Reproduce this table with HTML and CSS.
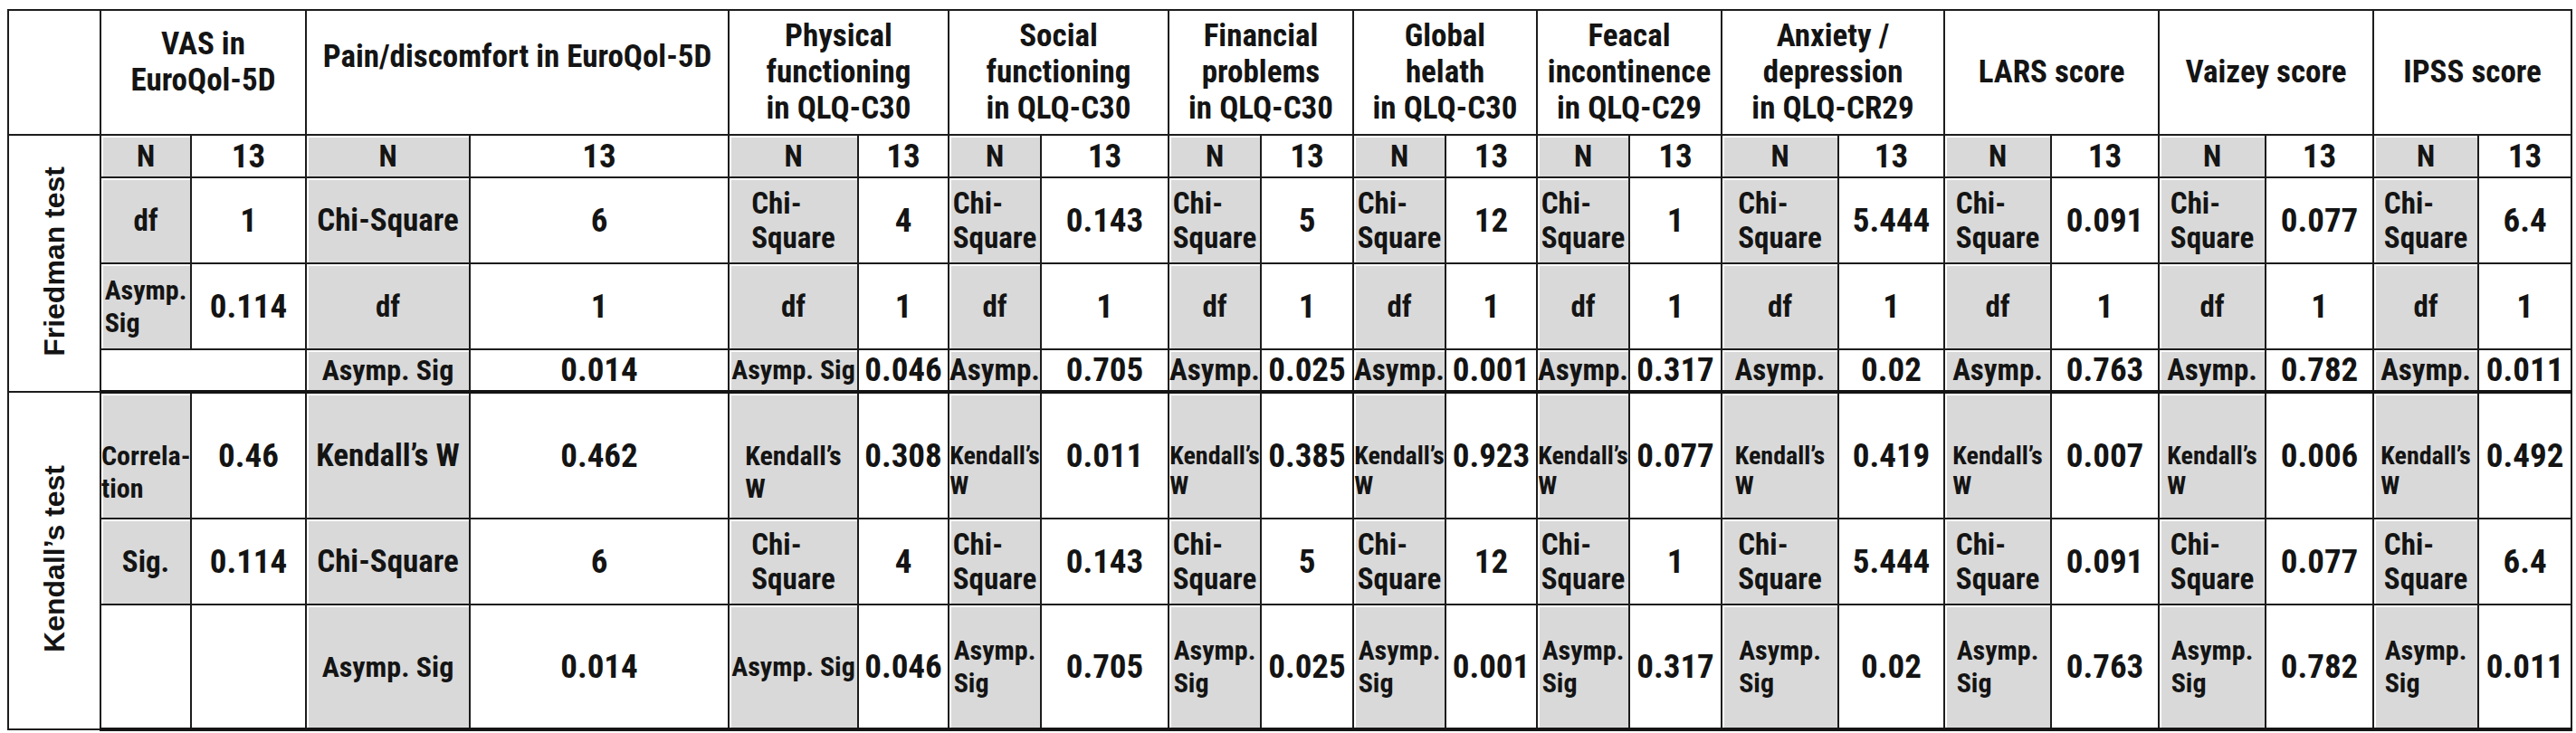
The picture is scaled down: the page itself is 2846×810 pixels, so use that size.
FILE: index.html
```html
<!DOCTYPE html>
<html lang="en">
<head>
<meta charset="utf-8">
<title>Friedman and Kendall's tests</title>
<link rel="stylesheet" href="styles.css">
</head>
<body>
<table class="stats">
  <colgroup>
    <col class="c-test"><col class="c-vl"><col class="c-vv"><col class="c-pl"><col class="c-pv">
    <col class="c-phl"><col class="c-phv"><col class="c-sl"><col class="c-sv">
    <col class="c-fl"><col class="c-fv"><col class="c-gl"><col class="c-gv">
    <col class="c-fel"><col class="c-fev"><col class="c-al"><col class="c-av">
    <col class="c-ll"><col class="c-lv"><col class="c-vzl"><col class="c-vzv">
    <col class="c-il"><col class="c-iv">
  </colgroup>
  <tr class="r-head">
    <th></th>
    <th colspan="2" class="h-vas">VAS in<br>EuroQol-5D</th>
    <th colspan="2" class="h-pain">Pain/discomfort in EuroQol-5D</th>
    <th colspan="2">Physical<br>functioning<br>in QLQ-C30</th>
    <th colspan="2">Social<br>functioning<br>in QLQ-C30</th>
    <th colspan="2">Financial<br>problems<br>in QLQ-C30</th>
    <th colspan="2">Global<br>helath<br>in QLQ-C30</th>
    <th colspan="2">Feacal<br>incontinence<br>in QLQ-C29</th>
    <th colspan="2">Anxiety /<br>depression<br>in QLQ-CR29</th>
    <th colspan="2">LARS score</th>
    <th colspan="2">Vaizey score</th>
    <th colspan="2">IPSS score</th>
  </tr>
  <tr class="r-n">
    <td rowspan="4" class="test"><span class="test-label">Friedman test</span></td>
    <td class="lbl">N</td><td class="val">13</td>
    <td class="lbl">N</td><td class="val">13</td>
    <td class="lbl">N</td><td class="val">13</td>
    <td class="lbl">N</td><td class="val">13</td>
    <td class="lbl">N</td><td class="val">13</td>
    <td class="lbl">N</td><td class="val">13</td>
    <td class="lbl">N</td><td class="val">13</td>
    <td class="lbl">N</td><td class="val">13</td>
    <td class="lbl">N</td><td class="val">13</td>
    <td class="lbl">N</td><td class="val">13</td>
    <td class="lbl">N</td><td class="val">13</td>
  </tr>
  <tr class="r-mid">
    <td class="lbl">df</td><td class="val">1</td>
    <td class="lbl big">Chi-Square</td><td class="val">6</td>
    <td class="lbl"><div class="stack">Chi-Square</div></td><td class="val">4</td>
    <td class="lbl"><div class="stack">Chi-Square</div></td><td class="val">0.143</td>
    <td class="lbl"><div class="stack">Chi-Square</div></td><td class="val">5</td>
    <td class="lbl"><div class="stack">Chi-Square</div></td><td class="val">12</td>
    <td class="lbl"><div class="stack">Chi-Square</div></td><td class="val">1</td>
    <td class="lbl"><div class="stack">Chi-Square</div></td><td class="val">5.444</td>
    <td class="lbl"><div class="stack">Chi-Square</div></td><td class="val">0.091</td>
    <td class="lbl"><div class="stack">Chi-Square</div></td><td class="val">0.077</td>
    <td class="lbl"><div class="stack">Chi-Square</div></td><td class="val">6.4</td>
  </tr>
  <tr class="r-mid">
    <td class="lbl f30"><div class="stack">Asymp. Sig</div></td><td class="val">0.114</td>
    <td class="lbl">df</td><td class="val">1</td>
    <td class="lbl">df</td><td class="val">1</td>
    <td class="lbl">df</td><td class="val">1</td>
    <td class="lbl">df</td><td class="val">1</td>
    <td class="lbl">df</td><td class="val">1</td>
    <td class="lbl">df</td><td class="val">1</td>
    <td class="lbl">df</td><td class="val">1</td>
    <td class="lbl">df</td><td class="val">1</td>
    <td class="lbl">df</td><td class="val">1</td>
    <td class="lbl">df</td><td class="val">1</td>
  </tr>
  <tr class="r-last">
    <td colspan="2" class="blank"></td>
    <td class="lbl f32">Asymp. Sig</td><td class="val">0.014</td>
    <td class="lbl f30">Asymp. Sig</td><td class="val">0.046</td>
    <td class="lbl">Asymp.</td><td class="val">0.705</td>
    <td class="lbl">Asymp.</td><td class="val">0.025</td>
    <td class="lbl">Asymp.</td><td class="val">0.001</td>
    <td class="lbl">Asymp.</td><td class="val">0.317</td>
    <td class="lbl">Asymp.</td><td class="val">0.02</td>
    <td class="lbl">Asymp.</td><td class="val">0.763</td>
    <td class="lbl">Asymp.</td><td class="val">0.782</td>
    <td class="lbl">Asymp.</td><td class="val">0.011</td>
  </tr>
  <tr class="r-k1">
    <td rowspan="3" class="test"><span class="test-label">Kendall’s test</span></td>
    <td class="lbl f30"><div class="stack hang flush">Correla-tion</div></td><td class="val">0.46</td>
    <td class="lbl big">Kendall’s W</td><td class="val">0.462</td>
    <td class="lbl f30"><div class="stack hang">Kendall’s W</div></td><td class="val">0.308</td>
    <td class="lbl f28"><div class="stack hang">Kendall’s W</div></td><td class="val">0.011</td>
    <td class="lbl f28"><div class="stack hang">Kendall’s W</div></td><td class="val">0.385</td>
    <td class="lbl f28"><div class="stack hang">Kendall’s W</div></td><td class="val">0.923</td>
    <td class="lbl f28"><div class="stack hang">Kendall’s W</div></td><td class="val">0.077</td>
    <td class="lbl f28"><div class="stack hang">Kendall’s W</div></td><td class="val">0.419</td>
    <td class="lbl f28"><div class="stack hang">Kendall’s W</div></td><td class="val">0.007</td>
    <td class="lbl f28"><div class="stack hang">Kendall’s W</div></td><td class="val">0.006</td>
    <td class="lbl f28"><div class="stack hang">Kendall’s W</div></td><td class="val">0.492</td>
  </tr>
  <tr class="r-mid">
    <td class="lbl">Sig.</td><td class="val">0.114</td>
    <td class="lbl big">Chi-Square</td><td class="val">6</td>
    <td class="lbl"><div class="stack">Chi-Square</div></td><td class="val">4</td>
    <td class="lbl"><div class="stack">Chi-Square</div></td><td class="val">0.143</td>
    <td class="lbl"><div class="stack">Chi-Square</div></td><td class="val">5</td>
    <td class="lbl"><div class="stack">Chi-Square</div></td><td class="val">12</td>
    <td class="lbl"><div class="stack">Chi-Square</div></td><td class="val">1</td>
    <td class="lbl"><div class="stack">Chi-Square</div></td><td class="val">5.444</td>
    <td class="lbl"><div class="stack">Chi-Square</div></td><td class="val">0.091</td>
    <td class="lbl"><div class="stack">Chi-Square</div></td><td class="val">0.077</td>
    <td class="lbl"><div class="stack">Chi-Square</div></td><td class="val">6.4</td>
  </tr>
  <tr class="r-k3">
    <td class="blank"></td><td class="blank"></td>
    <td class="lbl f32">Asymp. Sig</td><td class="val">0.014</td>
    <td class="lbl f30">Asymp. Sig</td><td class="val">0.046</td>
    <td class="lbl f30"><div class="stack">Asymp. Sig</div></td><td class="val">0.705</td>
    <td class="lbl f30"><div class="stack">Asymp. Sig</div></td><td class="val">0.025</td>
    <td class="lbl f30"><div class="stack">Asymp. Sig</div></td><td class="val">0.001</td>
    <td class="lbl f30"><div class="stack">Asymp. Sig</div></td><td class="val">0.317</td>
    <td class="lbl f30"><div class="stack">Asymp. Sig</div></td><td class="val">0.02</td>
    <td class="lbl f30"><div class="stack">Asymp. Sig</div></td><td class="val">0.763</td>
    <td class="lbl f30"><div class="stack">Asymp. Sig</div></td><td class="val">0.782</td>
    <td class="lbl f30"><div class="stack">Asymp. Sig</div></td><td class="val">0.011</td>
  </tr>
</table>
</body>
</html>
```

FILE: styles.css
```css
body {
  margin: 10px 0 0 8px;
  background: #ffffff;
  color: #141414;
  font-family: Roboto, "Open Sans", "Liberation Sans", sans-serif;
  font-stretch: condensed;
  font-weight: 700;
}

.stats {
  border-collapse: collapse;
  table-layout: fixed;
  width: 2834px;
}

.stats th,
.stats td {
  border: 2px solid #1c1c1c;
  padding: 0;
  text-align: center;
  vertical-align: middle;
  font-weight: 700;
  overflow: hidden;
}

/* column widths */
.c-test { width: 102px; }
.c-vl { width: 100px; }
.c-vv { width: 127px; }
.c-pl { width: 181px; }
.c-pv { width: 286px; }
.c-phl { width: 143px; }
.c-phv { width: 100px; }
.c-sl { width: 102px; }
.c-sv { width: 141px; }
.c-fl { width: 102px; }
.c-fv { width: 102px; }
.c-gl { width: 102px; }
.c-gv { width: 101px; }
.c-fel { width: 102px; }
.c-fev { width: 102px; }
.c-al { width: 129px; }
.c-av { width: 117px; }
.c-ll { width: 118px; }
.c-lv { width: 119px; }
.c-vzl { width: 118px; }
.c-vzv { width: 119px; }
.c-il { width: 116px; }
.c-iv { width: 103px; }

/* row heights */
.r-head { height: 138px; }
.r-n { height: 47px; }
.r-mid { height: 95px; }
.r-last { height: 47px; }
.r-k1 { height: 140px; }
.r-k3 { height: 138px; }

.r-head th {
  font-size: 35px;
  line-height: 40px;
}

.stats th.h-vas { padding-bottom: 22px; }
.stats th.h-pain { padding-bottom: 34px; }

.r-last td {
  border-bottom: 4px solid #141414;
}

.r-k3 td {
  border-bottom: 4px solid #141414;
}

.lbl {
  background: #d9d9d9;
  box-shadow: inset 2px 2px 0 0 #ffffff;
  font-size: 33px;
  line-height: 38px;
}

.r-last .lbl,
.r-last .val {
  line-height: 36px;
}

.val {
  font-size: 37px;
  line-height: 40px;
}

.lbl.big { font-size: 35px; }
.lbl.f28 { font-size: 28px; line-height: 33px; }
.lbl.f30 { font-size: 30px; line-height: 36px; }
.lbl.f32 { font-size: 32px; line-height: 36px; }

.stack {
  width: min-content;
  margin: 0 auto;
  text-align: left;
}

.stack.hang {
  height: 1lh;
}

.stack.flush {
  margin: 0;
}

.blank {
  background: #ffffff;
}

.test {
  background: #ffffff;
}

.test-label {
  display: inline-block;
  writing-mode: vertical-rl;
  transform: rotate(180deg);
  font-family: "Liberation Sans", Arial, sans-serif;
  font-stretch: normal;
  font-size: 32px;
  line-height: 38px;
  font-weight: 700;
}
```
